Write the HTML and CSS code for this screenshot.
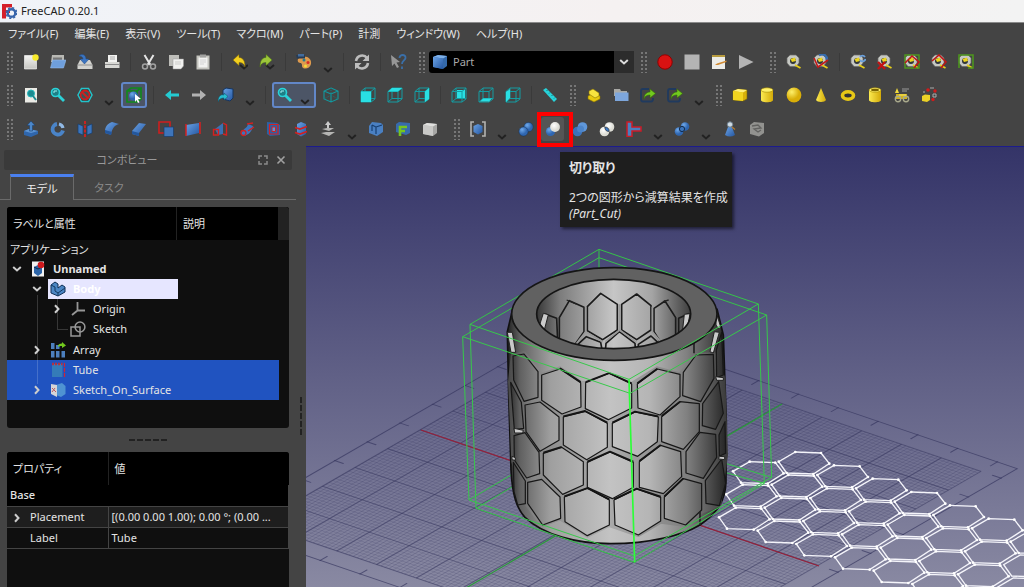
FILE: index.html
```html
<!DOCTYPE html>
<html lang="ja">
<head>
<meta charset="utf-8">
<title>FreeCAD 0.20.1</title>
<link rel="stylesheet" href="styles.css">
</head>
<body>
<svg class="sprite" aria-hidden="true">
  <defs>
    <linearGradient id="blue" x2="1" y2="1"><stop stop-color="#6ba3e6"/><stop offset="1" stop-color="#2456a0"/></linearGradient>
    <linearGradient id="yel" x2="1"><stop stop-color="#fbea50"/><stop offset="1" stop-color="#d3aa08"/></linearGradient>
    <linearGradient id="gry" y2="1" x2="0"><stop stop-color="#f4f4f2"/><stop offset="1" stop-color="#c4c4c0"/></linearGradient>
    <radialGradient id="ballb" cx=".35" cy=".3"><stop stop-color="#6fa9ea"/><stop offset="1" stop-color="#2f66b0"/></radialGradient>
    <radialGradient id="ballw" cx=".4" cy=".35"><stop stop-color="#fff"/><stop offset="1" stop-color="#dcdcd4"/></radialGradient>
    <radialGradient id="bally" cx=".35" cy=".3"><stop stop-color="#fdf06a"/><stop offset="1" stop-color="#d9ae08"/></radialGradient>
  </defs>
  <symbol id="new" viewBox="0 0 16 16"><path d="M1.500 1.500H13.500V15H1.500z" fill="url(#gry)" stroke="#fff" stroke-width=".6"/><circle cx="12.500" cy="3.500" r="3.200" fill="#f7ea2c"/></symbol>
  <symbol id="open" viewBox="0 0 16 16"><path d="M2 1H14V8H1z" fill="#b9b9b4"/><path d="M3 3.500H12V7H3z" fill="#777"/><path d="M2.500 6H16L13.500 14H.5z" fill="#6f9fdc" stroke="#9cc2ee" stroke-width=".5"/></symbol>
  <symbol id="save" viewBox="0 0 16 16"><path d="M3 6H13L15.500 11V15H.5V11z" fill="#d2d2ce"/><path d="M.5 11H15.500" stroke="#909090"/><path d="M2 2C5-1 9 1 9 5H12L7.500 10 3 5H6C6 3 4 2 2 2z" fill="#3b74c0" stroke="#204a87" stroke-width=".5"/></symbol>
  <symbol id="print" viewBox="0 0 16 16"><path d="M4 1H13V8H4z" fill="#f2f2f0"/><path d="M6 3H11M6 5H11" stroke="#aaa"/><path d="M1 8H15.500V14H1z" fill="#d8d8d4"/><path d="M1 10.500H15.500" stroke="#8c8c8c"/></symbol>
  <symbol id="cut" viewBox="0 0 16 16"><path d="M3.500 1 9.500 11M12.500 1 6.500 11" stroke="#e6e6e6" stroke-width="2"/><g fill="none" stroke="#a2a2a2" stroke-width="1.500"><circle cx="4" cy="12.500" r="2.500"/><circle cx="12" cy="12.500" r="2.500"/></g></symbol>
  <symbol id="copy" viewBox="0 0 16 16"><path d="M1 1H11V12H1z" fill="#bdbdb9"/><path d="M5 5H15.500V12L13 15H5z" fill="#f1f1ef" stroke="#999" stroke-width=".5"/><path d="M7 8H13M7 10H13" stroke="#bbb" stroke-width=".7"/></symbol>
  <symbol id="paste" viewBox="0 0 16 16"><path d="M1.500 1.500H14.500V15.500H1.500z" fill="#c3c3bd"/><path d="M3.500 3.500H12.500V13.500H3.500z" fill="#f2f2f0"/><path d="M5 .5H11V3.500H5z" fill="#a2a2a0"/><path d="M5 6H11M5 8H11M5 10H9" stroke="#c8c8c8" stroke-width=".7"/></symbol>
  <symbol id="undo" viewBox="0 0 16 16"><path d="m8 11 4 3.500 4-3.500" fill="none" stroke="#222" stroke-width="2"/><path d="M1 6 7 .5V3.500C11 3.500 13 7 13 13C12 9.500 10 8.500 7 8.500V11.500z" fill="#f2cf1f" stroke="#806800" stroke-width=".5"/></symbol>
  <symbol id="redo" viewBox="0 0 16 16"><path d="m7 11 4 3.500 4-3.500" fill="none" stroke="#222" stroke-width="2"/><path d="M13 6 7 .5V3.500C3 3.500 1 7 1 13C2 9.500 4 8.500 7 8.500V11.500z" fill="#9dc63a" stroke="#4e7a10" stroke-width=".5"/></symbol>
  <symbol id="palette" viewBox="0 0 16 16"><path d="M5 3C11 1 16 5 15 10C14 14 10 15.500 7 14C5 12 7 11 5 9C3 9 1 8 2 5z" fill="#dd9a4e"/><path d="M0 1H9V4.500H1z" fill="#263b55"/><path d="M2 0H8V2.500H2z" fill="#426c9e"/><circle cx="8" cy="6" r="1.500" fill="#287a90"/><circle cx="12" cy="8.500" r="1.500" fill="#d72b25"/><circle cx="9.500" cy="12" r="1.500" fill="#f2dc36"/></symbol>
  <symbol id="refresh" viewBox="0 0 16 16"><path d="M2 7C3 1 10 0 13 4M14 9C13 15 6 16 3 12" fill="none" stroke="#bcbcbc" stroke-width="2.600"/><path d="M15 .5V7H8.500zM1 15.500V9H7.500z" fill="#bcbcbc"/></symbol>
  <symbol id="what" viewBox="0 0 16 16"><path d="M0 1 9 8 5.500 8.500 8 13 6 14 3.500 9.500 1 12z" fill="#979797"/><path d="M8.500 4C8.500 0 15 0 14.500 4C14 7 11 6 11 10M11 12.500V15" fill="none" stroke="#3a6fa8" stroke-width="1.800"/></symbol>
  <symbol id="part" viewBox="0 0 16 16"><path d="M1 3 6 1 15 2 15 12 11 15 1 13z" fill="#3469aa"/><path d="M1 3 6 1 15 2 11 4.500z" fill="#7eb0e8"/><path d="M1 3 11 4.500V15L1 13z" fill="url(#blue)"/></symbol>
  <symbol id="rec" viewBox="0 0 16 16"><circle cx="8" cy="8" r="7.200" fill="#d81212" stroke="#920000"/></symbol>
  <symbol id="stop" viewBox="0 0 16 16"><path d="M.5.5H15.500V15.500H.5z" fill="#b4b4b4"/></symbol>
  <symbol id="edit" viewBox="0 0 16 16"><path d="M1 1H14V15H1z" fill="#ecece8"/><path d="M1 1H14V3H1z" fill="#b79b3e"/><path d="M4 11 6 9.500 15.500 6.500 15.500 8 7 11z" fill="#d08a33"/></symbol>
  <symbol id="play" viewBox="0 0 16 16"><path d="M1 1 15.500 8 1 15z" fill="#b4b4b4"/></symbol>
  <symbol id="tape" viewBox="0 0 16 16"><path d="M1 4 4 1H10L13 4V9L10 12.500H4L1 9z" fill="#c6c8c3" stroke="#6a6b68" stroke-width=".7"/><circle cx="7" cy="7" r="3" fill="#31363a"/><path d="M4.500 5 9 3.500 10 7 6 8z" fill="#ecd41f"/><path d="M9 11 14.500 14" stroke="#e8cf1a" stroke-width="1.800"/></symbol>
  <symbol id="tapea" viewBox="0 0 16 16"><use href="#tape"/><path d="M6 1C11-1 14 2 14 6" fill="none" stroke="#356cae" stroke-width="2.500"/><path d="M1 4 5 13 15 6" fill="none" stroke="#c31919" stroke-width="1.600"/></symbol>
  <symbol id="taper" viewBox="0 0 16 16"><use href="#tape"/><path d="M10 3A3 3 0 0 1 15 3M15.500 5A3 3 0 0 1 10 6" fill="none" stroke="#6aa0dc" stroke-width="1.800"/></symbol>
  <symbol id="tapex" viewBox="0 0 16 16"><use href="#tape"/><path d="m1 8 7 7M8 8l-7 7" stroke="#c31212" stroke-width="2.400"/></symbol>
  <symbol id="tapeb" viewBox="0 0 16 16"><use href="#tape"/><path d="M1 1H15V14H1z" fill="none" stroke="#4d951e" stroke-width="1.500"/><path d="m1 9 7-7 7 6-5 6" fill="none" stroke="#bd1717" stroke-width="1.600"/></symbol>
  <symbol id="tapec" viewBox="0 0 16 16"><use href="#tape"/><path d="m1 7 7-6 7 7-5 6" fill="none" stroke="#bd1717" stroke-width="1.600"/></symbol>
  <symbol id="taped" viewBox="0 0 16 16"><use href="#tape"/><path d="M1 14V1H15V14H10" fill="none" stroke="#4d951e" stroke-width="1.600"/></symbol>
  <symbol id="lens" viewBox="0 0 16 16"><circle cx="5.500" cy="5.500" r="4" fill="#1e7f86" stroke="#2bd2d8" stroke-width="1.600"/><path d="m8.500 8.500 5.500 5.500" stroke="#2bd2d8" stroke-width="2.800"/><path d="M4 6V4H7" fill="none" stroke="#9af2f2"/></symbol>
  <symbol id="fit" viewBox="0 0 16 16"><path d="M2 1H14V15.500H2z" fill="#ebebe6"/><circle cx="8" cy="6.500" r="3.500" fill="#1b8a90" stroke="#20b6bc"/><path d="m10 9 3 4" stroke="#1b8a90" stroke-width="2"/></symbol>
  <symbol id="style" viewBox="0 0 16 16"><path d="M4.500 1.500H11.500L15 8 11.500 14.500H4.500L1 8z" fill="#293b3c" stroke="#23c3ca" stroke-width="1.500"/><circle cx="8" cy="8" r="4.500" fill="#3c5557" stroke="#cf1f1f" stroke-width="1.800"/><path d="m5 5 6 6" stroke="#cf1f1f" stroke-width="1.800"/></symbol>
  <symbol id="box" viewBox="0 0 16 16"><path d="M1 4H11V15H1zM1 4 5 1H15L11 4M15 1V12L11 15" fill="none" stroke="#0f8a1c" stroke-width="1.600"/><circle cx="7.500" cy="9" r="4.500" fill="url(#ballb)"/><path d="m9 7 6 5-3 .3 1.500 3-1.500.7-1.500-3L9 15z" fill="#fff"/></symbol>
  <symbol id="left" viewBox="0 0 16 16"><path d="M1 8 7 3V6.500H15V9.500H7V13z" fill="#24cbd2"/></symbol>
  <symbol id="right" viewBox="0 0 16 16"><path d="M15 8 9 3V6.500H1V9.500H9V13z" fill="#b2b2b2"/></symbol>
  <symbol id="link" viewBox="0 0 16 16"><path d="M5 3 8 1 15 2V11L12 14 5 12z" fill="url(#blue)" stroke="#15345f"/><path d="M0 15C0 9 3 7 6 8V6L10 9.500 6 13V11C3 11 1 12 0 15z" fill="#28bcd0" stroke="#114a60" stroke-width=".5"/></symbol>
  <symbol id="iso" viewBox="0 0 16 16"><path d="M8 1 15 4V12L8 15 1 12V4zM1 4 8 7 15 4M8 7V15" fill="none" stroke="#12999f" stroke-width="1.100"/><path d="M8 1V8M8 8 1 12M8 8 15 12" stroke="#14797d" stroke-dasharray="1 1"/></symbol>
  <symbol id="wire" viewBox="0 0 16 16"><path d="M1 4.500H11V15H1zM1 4.500 5 1H15L11 4.500M15 1V12L11 15M5 1V11.500H15M5 11.500 1 15" fill="none" stroke="#149ca2"/></symbol>
  <symbol id="front" viewBox="0 0 16 16"><use href="#wire"/><path d="M1 4.500H11V15H1z" fill="#29dfe3"/></symbol>
  <symbol id="top" viewBox="0 0 16 16"><use href="#wire"/><path d="M1 4.500 5 1H15L11 4.500z" fill="#29dfe3"/></symbol>
  <symbol id="side" viewBox="0 0 16 16"><use href="#wire"/><path d="M11 4.500 15 1V12L11 15z" fill="#29dfe3"/></symbol>
  <symbol id="rear" viewBox="0 0 16 16"><path d="M6 3H14V11H6z" fill="#29dfe3"/><use href="#wire"/></symbol>
  <symbol id="bottom" viewBox="0 0 16 16"><use href="#wire"/><path d="M2 14.500 5 11.500H14L11 14.500z" fill="#29dfe3"/></symbol>
  <symbol id="lside" viewBox="0 0 16 16"><use href="#wire"/><path d="M1 5 5 2V11L1 15z" fill="#29dfe3"/></symbol>
  <symbol id="ruler" viewBox="0 0 16 16"><path d="M1 3 4 1 15 12 12 15z" fill="#27d3da"/><path d="m5.500 3-1 1M8 5.500l-1 1M10.500 8l-1 1M13 10.500l-1 1" stroke="#11757b"/></symbol>
  <symbol id="brick" viewBox="0 0 16 16"><path d="M2 9 8 6 14 9V12L8 15 2 12z" fill="#e8c910" stroke="#8a7200" stroke-width=".6"/><path d="M3 4 7 2 13 6V9L9 11 3 7z" fill="#f8e440" stroke="#8a7200" stroke-width=".6"/></symbol>
  <symbol id="folder" viewBox="0 0 16 16"><path d="M1 2H7L8 4H14V9H1z" fill="#a9a9a6"/><path d="M2 5.500H15.500V14H2z" fill="#7da6dc"/></symbol>
  <symbol id="export" viewBox="0 0 16 16"><path d="M9 2H3Q1 2 1 4V12Q1 14.500 3 14.500H11Q13 14.500 13 12V11" fill="none" stroke="#203a5e" stroke-width="1.800"/><path d="M4 12C4 7 7 5 10 5V2L15.500 6.500 10 11V8C7 8 5 9 4 12z" fill="#72c91f" stroke="#366c08" stroke-width=".6"/></symbol>
  <symbol id="ybox" viewBox="0 0 16 16"><path d="M1 4 6 2 15 3V12L11 14 1 13z" fill="#d8b20a" stroke="#7b6700" stroke-width=".6"/><path d="M1 4 6 2 15 3 11 5.500z" fill="#fff07a"/><path d="M1 4 11 5.500V14L1 13z" fill="#f2d520"/></symbol>
  <symbol id="ycyl" viewBox="0 0 16 16"><path d="M2 3V13C2 16 14 16 14 13V3z" fill="url(#yel)"/><ellipse cx="8" cy="3" rx="6" ry="2.200" fill="#fff16a" stroke="#a38800" stroke-width=".6"/></symbol>
  <symbol id="yball" viewBox="0 0 16 16"><circle cx="8" cy="8" r="7.400" fill="url(#bally)"/></symbol>
  <symbol id="ycone" viewBox="0 0 16 16"><path d="M8 1 13 13C12 15.500 4 15.500 3 13z" fill="url(#yel)"/></symbol>
  <symbol id="ytor" viewBox="0 0 16 16"><ellipse cx="8" cy="8.500" rx="5.500" ry="3.700" fill="#333" stroke="#e6c716" stroke-width="3.600"/></symbol>
  <symbol id="ytube" viewBox="0 0 16 16"><use href="#ycyl"/><ellipse cx="8" cy="3" rx="4" ry="1.200" fill="#7a6400"/></symbol>
  <symbol id="yprim" viewBox="0 0 16 16"><path d="M3 1 5 6H1z" fill="#f2dc3c"/><path d="M8 2H15M8 4H13" stroke="#999"/><path d="M2 7H13V12H2z" fill="#d1b31b"/><g fill="none" stroke="#a9a98c" stroke-width="1.400"><circle cx="4" cy="12" r="2.700"/><circle cx="12" cy="12" r="2.700"/></g><path d="M5 8H12" stroke="#ffea62"/></symbol>
  <symbol id="ybuild" viewBox="0 0 16 16"><path d="M1 9 4 7.500 9 8V13L6 15 1 14z" fill="#ecd126"/><g fill="#d11b1b"><circle cx="7" cy="3" r="1.800"/><circle cx="14" cy="4" r="1.700"/><circle cx="12" cy="12.500" r="1.700"/></g><path d="M9 1H13M12 7H15V10H12zM2 5H4" fill="none" stroke="#aaa"/></symbol>
  <symbol id="extr" viewBox="0 0 16 16"><path d="M1 10 6 8 15 10V13L8 16 1 14z" fill="#2f66ac"/><path d="M1 10 6 8 15 10 8 12z" fill="#5c94d4"/><path d="M8 0 12 4.500H9.500V10H6.500V4.500H4z" fill="#4c87c9" stroke="#163862" stroke-width=".5"/></symbol>
  <symbol id="revo" viewBox="0 0 16 16"><path d="M7 3A5.300 5.300 0 1 0 13 9.500" fill="none" stroke="#4a84c8" stroke-width="3.800"/><path d="M9 3A5.300 5.300 0 0 1 13 7" fill="none" stroke="#91b9e5" stroke-width="3.200"/></symbol>
  <symbol id="mirror" viewBox="0 0 16 16"><path d="M1 3 6 5V14L1 12zM15 3 10 5V14L15 12z" fill="#3b74bb" stroke="#173c6b" stroke-width=".7"/><path d="M8 0V16" stroke="#d52020" stroke-width="1.800" stroke-dasharray="3 1.300"/></symbol>
  <symbol id="fillet" viewBox="0 0 16 16"><path d="M1 12V9C2 4 5 2 8 1L15 3C11 4 8 7 7 14z" fill="url(#blue)"/><path d="M1 9 8 11 7 14 1 12z" fill="#24579c"/></symbol>
  <symbol id="chamfer" viewBox="0 0 16 16"><path d="M1 10 8 2 15 3 8 12V15L1 13z" fill="url(#blue)"/><path d="M1 10 8 12V15L1 13z" fill="#24579c"/></symbol>
  <symbol id="face" viewBox="0 0 16 16"><path d="M1 1H12V12H1z" fill="none" stroke="#cf1e1e" stroke-width="1.600"/><path d="M6 6H15.500V15.500H6z" fill="#3e75bb" stroke="#1a3c6c" stroke-width=".7"/></symbol>
  <symbol id="ruled" viewBox="0 0 16 16"><path d="M1 4 14 2V12L1 15z" fill="url(#blue)"/><path d="M1 3V15M15 1V13" stroke="#d52020" stroke-width="1.500"/></symbol>
  <symbol id="loft" viewBox="0 0 16 16"><path d="M3 8 11 2V13L6 14z" fill="#3b71b5"/><path d="M1.500 8.500H6.500V14H1.500z" fill="none" stroke="#d52020" stroke-width="1.400"/><path d="M11 2 14.500 4V14L11 13" fill="none" stroke="#d52020" stroke-width="1.400"/></symbol>
  <symbol id="sweep" viewBox="0 0 16 16"><path d="M2 13C5 6 8 8 9 3L14 5C13 11 9 14 5 15z" fill="#3c75bd"/><circle cx="4.500" cy="12" r="2.500" fill="none" stroke="#d52020" stroke-width="1.300"/><path d="M8 3 14 2M9 10 15 6" stroke="#d52020" stroke-width="1.500"/></symbol>
  <symbol id="offset" viewBox="0 0 16 16"><path d="M1 1 11 2 14 4V14L4 15 1 13z" fill="#2c61a5"/><path d="M3.500 3.500H12V13H3.500z" fill="none" stroke="#d52020" stroke-width="1.200"/><path d="M6 6H9.500V10.500H6z" fill="#5c94d4" stroke="#d52020"/></symbol>
  <symbol id="cross" viewBox="0 0 16 16"><path d="M4 3 8 1 13 3V13L8 15.500 4 13z" fill="url(#blue)"/><path d="M2 6.500 7 8 14 5.500M2 11.500 7 13 14 10.500" fill="none" stroke="#d52020" stroke-width="1.700"/></symbol>
  <symbol id="sect" viewBox="0 0 16 16"><path d="M8 0 11 4H9V8H7V4H5z" fill="#cacaca"/><path d="M2 8 7 7H14L9 10zM1 12 6 11H15L9 15z" fill="#b6b6b4"/></symbol>
  <symbol id="thick" viewBox="0 0 16 16"><path d="M4 1 13 2 15 4V11L9 15 1 12V5z" fill="#4a80c2"/><path d="M4 4 8 6V13M8 6 14 4M4 4V10" fill="none" stroke="#173e70" stroke-width="1.200"/></symbol>
  <symbol id="proj" viewBox="0 0 16 16"><path d="M1 3 4 1 15 2V12L11 14 1 11z" fill="#376bad"/><path d="M5 15V6H12M5 10H10" fill="none" stroke="#77c51f" stroke-width="2.600"/></symbol>
  <symbol id="gcube" viewBox="0 0 16 16"><path d="M1 4 5 2 15 3V12L11 15 1 13z" fill="#a6a6a4"/><path d="M1 4 11 5.500V15L1 13z" fill="#c9c9c7"/><path d="M1 4 5 2 15 3 11 5.500z" fill="#e0e0de"/></symbol>
  <symbol id="comp" viewBox="0 0 16 16"><path d="M3.500 5 8 3 12.500 5V11L8 13.500 3.500 11z" fill="url(#blue)"/><path d="M4 1H1V15H4M12 1H15V15H12" fill="none" stroke="#b3b3b1" stroke-width="1.600"/></symbol>
  <symbol id="bool" viewBox="0 0 16 16"><circle cx="10.500" cy="6" r="4.600" fill="url(#ballb)" stroke="#143258" stroke-width=".5"/><circle cx="5.500" cy="10.500" r="4.600" fill="url(#ballb)" stroke="#143258" stroke-width=".5"/></symbol>
  <symbol id="pcut" viewBox="0 0 16 16"><circle cx="5.500" cy="10.500" r="4.600" fill="url(#ballb)"/><circle cx="10" cy="6" r="4.900" fill="url(#ballw)"/></symbol>
  <symbol id="fuse" viewBox="0 0 16 16"><circle cx="10.500" cy="6" r="4.800" fill="#5f97da"/><circle cx="5.500" cy="10.500" r="4.800" fill="#3c73b9"/><circle cx="8.500" cy="8" r="3.500" fill="#4c85ca"/></symbol>
  <symbol id="common" viewBox="0 0 16 16"><circle cx="10.500" cy="6" r="4.800" fill="url(#ballw)"/><circle cx="5.500" cy="10.500" r="4.800" fill="url(#ballw)"/><path d="M5.800 6Q10.200 6 10.200 10.500Q5.800 10.500 5.800 6z" fill="#3c78c2" stroke="#222" stroke-width=".6"/></symbol>
  <symbol id="join" viewBox="0 0 16 16"><path d="M1 1H6V6H15V10H6V15.500H1z" fill="#4a7fbe" stroke="#cc1b26" stroke-width="1.500"/></symbol>
  <symbol id="split" viewBox="0 0 16 16"><circle cx="11" cy="5.500" r="4.300" fill="url(#ballb)"/><circle cx="5" cy="10.500" r="4.300" fill="url(#ballb)"/><circle cx="8" cy="8" r="2.600" fill="#3b74bb" stroke="#122c4d"/></symbol>
  <symbol id="check" viewBox="0 0 16 16"><path d="M6 6H10L13 14Q8 17 3 14z" fill="url(#blue)"/><circle cx="8" cy="3.500" r="2.700" fill="#cfdbe3" stroke="#6c7d8c"/><path d="m10 6 3 2.500" stroke="#b07a31" stroke-width="1.400"/></symbol>
  <symbol id="defeat" viewBox="0 0 16 16"><path d="M1 4 5 1 15 2V12L10 15.500 1 13z" fill="#92928f"/><path d="M3 5 9 4 12 7 5 8 9 11 12 9" fill="none" stroke="#626260" stroke-width="1.300"/></symbol>
  <symbol id="chev" viewBox="0 0 10 6"><path d="m1.200 1 3.800 3.500L8.800 1" fill="none" stroke="currentColor" stroke-width="2"/></symbol>
  <symbol id="logo" viewBox="0 0 16 16"><path d="M1 1H11V4.500H5V7H9V10H5V15.500H1z" fill="#d5202a"/><circle cx="10.500" cy="10" r="3.800" fill="none" stroke="#3765ab" stroke-width="2.400"/><circle cx="10.500" cy="10" r="5.300" fill="none" stroke="#3765ab" stroke-width="1.400" stroke-dasharray="2.160 2"/></symbol>
  <symbol id="doc" viewBox="0 0 16 16"><path d="M2 .5H14V15.500H2z" fill="#f1f1f1"/><path d="M4 6 8 4 12 6V12L8 15 4 12z" fill="#2d65a8"/><path d="M4 6 8 8 12 6" stroke="#0e2948" fill="none"/><circle cx="11" cy="4" r="3.300" fill="#cf1a1e"/></symbol>
  <symbol id="body" viewBox="0 0 16 16"><path d="M1 4 5 1 8 3V7L12 4 15 6V11L8 15 1 12z" fill="#4c86c4" stroke="#0e2e55"/><path d="M1 4 5 6V10L8 12V15M8 12 15 7" fill="none" stroke="#123961"/></symbol>
  <symbol id="origin" viewBox="0 0 16 16"><path d="M7.500 1V9.500H15M7.500 9.500 2 14" fill="none" stroke="#969696" stroke-width="1.800"/></symbol>
  <symbol id="sketch" viewBox="0 0 16 16"><path d="M1 6H10V15H1z" fill="none" stroke="#989898" stroke-width="1.500"/><circle cx="10" cy="6" r="4.900" fill="none" stroke="#989898" stroke-width="1.500"/></symbol>
  <symbol id="array" viewBox="0 0 16 16"><g fill="#4c7fbd"><path d="M1 1H4.500V7H1zM6 3H9.500V7H6zM1 9H4.500V15.500H1zM6 9H9.500V15.500H6zM11.500 9H15V15.500H11.500z"/></g><path d="M8 5C8 2 10 1.500 12 1.500V0L16 3.500 12 6V4C10 4 9 4 8 5z" fill="#72c81d"/></symbol>
  <symbol id="tube" viewBox="0 0 16 16"><path d="M2 2H12.500V15H2z" fill="#347bb8"/><path d="M2 2H12.500" stroke="#b23242" stroke-width="2.500" stroke-dasharray="2 1"/><path d="M14.500 1V15" stroke="#cf2634" stroke-width="1.200" stroke-dasharray="4 1"/></symbol>
  <symbol id="surf" viewBox="0 0 16 16"><path d="M6 3 12 1 15.500 4V12L11 15 6 13z" fill="#4f93d2"/><path d="M1 2 7 3V15L1 12z" fill="#d5d5d7"/><path d="m2 6 4 4M5 6 2 10" stroke="#be5a5f"/></symbol>
</svg>

<div class="app">
  <header class="titlebar"><svg class="ico"><use href="#logo"/></svg><span>FreeCAD 0.20.1</span></header>
  <nav class="menubar">
    <button>ファイル(F)</button><button>編集(E)</button><button>表示(V)</button><button>ツール(T)</button><button>マクロ(M)</button><button>パート(P)</button><button>計測</button><button>ウィンドウ(W)</button><button>ヘルプ(H)</button>
  </nav>

  <div class="toolrow first">
    <div class="bar"><i class="grip"></i>
      <button class="tool" aria-label="新規"><svg class="ico"><use href="#new"/></svg></button>
      <button class="tool" aria-label="開く"><svg class="ico"><use href="#open"/></svg></button>
      <button class="tool" aria-label="保存"><svg class="ico"><use href="#save"/></svg></button>
      <button class="tool" aria-label="印刷"><svg class="ico"><use href="#print"/></svg></button>
      <i class="sep"></i>
      <button class="tool" aria-label="カット"><svg class="ico"><use href="#cut"/></svg></button>
      <button class="tool" aria-label="コピー"><svg class="ico"><use href="#copy"/></svg></button>
      <button class="tool" aria-label="貼り付け"><svg class="ico"><use href="#paste"/></svg></button>
      <i class="sep"></i>
      <button class="tool" aria-label="元に戻す"><svg class="ico"><use href="#undo"/></svg></button>
      <button class="tool" aria-label="やり直す"><svg class="ico"><use href="#redo"/></svg></button>
      <i class="sep"></i>
      <button class="tool" aria-label="外観"><svg class="ico"><use href="#palette"/></svg></button>
      <button class="drop" aria-label="メニュー"><svg><use href="#chev"/></svg></button>
      <i class="sep"></i>
      <button class="tool" aria-label="更新"><svg class="ico"><use href="#refresh"/></svg></button>
      <i class="sep"></i>
      <button class="tool" aria-label="これは何"><svg class="ico"><use href="#what"/></svg></button>
    </div>
    <div class="bar"><i class="grip"></i>
      <div class="combo">
        <svg class="ico"><use href="#part"/></svg>
        <select aria-label="ワークベンチ"><option>Part</option></select>
        <span class="combo-arrow"><svg><use href="#chev"/></svg></span>
      </div>
    </div>
    <div class="bar"><i class="grip"></i>
      <button class="tool" aria-label="マクロの記録"><svg class="ico"><use href="#rec"/></svg></button>
      <button class="tool" aria-label="記録の停止"><svg class="ico"><use href="#stop"/></svg></button>
      <button class="tool" aria-label="マクロ"><svg class="ico"><use href="#edit"/></svg></button>
      <button class="tool" aria-label="マクロの実行"><svg class="ico"><use href="#play"/></svg></button>
    </div>
    <div class="bar apart"><i class="grip"></i>
      <button class="tool" aria-label="直線の計測"><svg class="ico"><use href="#tape"/></svg></button>
      <button class="tool" aria-label="角度の計測"><svg class="ico"><use href="#tapea"/></svg></button>
      <i class="sep"></i>
      <button class="tool" aria-label="計測の更新"><svg class="ico"><use href="#taper"/></svg></button>
      <button class="tool" aria-label="計測の消去"><svg class="ico"><use href="#tapex"/></svg></button>
      <button class="tool" aria-label="すべて切り替え"><svg class="ico"><use href="#tapeb"/></svg></button>
      <button class="tool" aria-label="3Dの切り替え"><svg class="ico"><use href="#tapec"/></svg></button>
      <button class="tool" aria-label="差分の切り替え"><svg class="ico"><use href="#taped"/></svg></button>
    </div>
  </div>

  <div class="toolrow">
    <div class="bar"><i class="grip"></i>
      <button class="tool" aria-label="全てにフィット"><svg class="ico"><use href="#fit"/></svg></button>
      <button class="tool" aria-label="選択にフィット"><svg class="ico"><use href="#lens"/></svg></button>
      <button class="tool" aria-label="描画スタイル"><svg class="ico"><use href="#style"/></svg></button>
      <button class="drop" aria-label="メニュー"><svg><use href="#chev"/></svg></button>
      <button class="tool on" aria-label="バウンディングボックス"><svg class="ico"><use href="#box"/></svg></button>
      <i class="sep"></i>
      <button class="tool" aria-label="戻る"><svg class="ico"><use href="#left"/></svg></button>
      <button class="tool" aria-label="進む"><svg class="ico"><use href="#right"/></svg></button>
      <button class="tool" aria-label="リンク"><svg class="ico"><use href="#link"/></svg></button>
      <button class="drop" aria-label="メニュー"><svg><use href="#chev"/></svg></button>
      <i class="sep"></i>
      <button class="tool on wide" aria-label="ズーム"><svg class="ico"><use href="#lens"/></svg><svg class="chev"><use href="#chev"/></svg></button>
      <button class="tool" aria-label="等角投影"><svg class="ico"><use href="#iso"/></svg></button>
      <i class="sep"></i>
      <button class="tool" aria-label="正面"><svg class="ico"><use href="#front"/></svg></button>
      <button class="tool" aria-label="上面"><svg class="ico"><use href="#top"/></svg></button>
      <button class="tool" aria-label="右"><svg class="ico"><use href="#side"/></svg></button>
      <i class="sep"></i>
      <button class="tool" aria-label="背面"><svg class="ico"><use href="#rear"/></svg></button>
      <button class="tool" aria-label="底面"><svg class="ico"><use href="#bottom"/></svg></button>
      <button class="tool" aria-label="左"><svg class="ico"><use href="#lside"/></svg></button>
      <i class="sep"></i>
      <button class="tool" aria-label="距離"><svg class="ico"><use href="#ruler"/></svg></button>
    </div>
    <div class="bar"><i class="grip"></i>
      <button class="tool" aria-label="パーツ"><svg class="ico"><use href="#brick"/></svg></button>
      <button class="tool" aria-label="グループ"><svg class="ico"><use href="#folder"/></svg></button>
      <button class="tool" aria-label="リンク作成"><svg class="ico"><use href="#export"/></svg></button>
      <button class="tool" aria-label="サブリンク"><svg class="ico"><use href="#export"/></svg></button>
      <button class="drop" aria-label="メニュー"><svg><use href="#chev"/></svg></button>
    </div>
    <div class="bar"><i class="grip"></i>
      <button class="tool" aria-label="直方体"><svg class="ico"><use href="#ybox"/></svg></button>
      <button class="tool" aria-label="円柱"><svg class="ico"><use href="#ycyl"/></svg></button>
      <button class="tool" aria-label="球"><svg class="ico"><use href="#yball"/></svg></button>
      <button class="tool" aria-label="円錐"><svg class="ico"><use href="#ycone"/></svg></button>
      <button class="tool" aria-label="トーラス"><svg class="ico"><use href="#ytor"/></svg></button>
      <button class="tool" aria-label="チューブ"><svg class="ico"><use href="#ytube"/></svg></button>
      <button class="tool" aria-label="プリミティブ"><svg class="ico"><use href="#yprim"/></svg></button>
      <button class="tool" aria-label="シェイプビルダー"><svg class="ico"><use href="#ybuild"/></svg></button>
    </div>
  </div>

  <div class="toolrow">
    <div class="bar"><i class="grip"></i>
      <button class="tool" aria-label="押し出し"><svg class="ico"><use href="#extr"/></svg></button>
      <button class="tool" aria-label="回転押し出し"><svg class="ico"><use href="#revo"/></svg></button>
      <button class="tool" aria-label="ミラー"><svg class="ico"><use href="#mirror"/></svg></button>
      <button class="tool" aria-label="フィレット"><svg class="ico"><use href="#fillet"/></svg></button>
      <button class="tool" aria-label="面取り"><svg class="ico"><use href="#chamfer"/></svg></button>
      <button class="tool" aria-label="面の作成"><svg class="ico"><use href="#face"/></svg></button>
      <button class="tool" aria-label="線織面"><svg class="ico"><use href="#ruled"/></svg></button>
      <button class="tool" aria-label="ロフト"><svg class="ico"><use href="#loft"/></svg></button>
      <button class="tool" aria-label="スイープ"><svg class="ico"><use href="#sweep"/></svg></button>
      <button class="tool" aria-label="断面"><svg class="ico"><use href="#offset"/></svg></button>
      <button class="tool" aria-label="断面図"><svg class="ico"><use href="#cross"/></svg></button>
      <button class="tool" aria-label="オフセット"><svg class="ico"><use href="#sect"/></svg></button>
      <button class="drop" aria-label="メニュー"><svg><use href="#chev"/></svg></button>
      <button class="tool" aria-label="厚み"><svg class="ico"><use href="#thick"/></svg></button>
      <button class="tool" aria-label="投影"><svg class="ico"><use href="#proj"/></svg></button>
      <button class="tool" aria-label="面の色"><svg class="ico"><use href="#gcube"/></svg></button>
    </div>
    <div class="bar apart"><i class="grip"></i>
      <button class="tool" aria-label="コンパウンド"><svg class="ico"><use href="#comp"/></svg></button>
      <button class="drop" aria-label="メニュー"><svg><use href="#chev"/></svg></button>
      <button class="tool" aria-label="ブーリアン演算"><svg class="ico"><use href="#bool"/></svg></button>
      <button class="tool hover" aria-label="切り取り"><svg class="ico"><use href="#pcut"/></svg><i class="mark"></i></button>
      <button class="tool" aria-label="結合"><svg class="ico"><use href="#fuse"/></svg></button>
      <button class="tool" aria-label="共通集合"><svg class="ico"><use href="#common"/></svg></button>
      <button class="tool" aria-label="接続"><svg class="ico"><use href="#join"/></svg></button>
      <button class="drop" aria-label="メニュー"><svg><use href="#chev"/></svg></button>
      <button class="tool" aria-label="分割"><svg class="ico"><use href="#split"/></svg></button>
      <button class="drop" aria-label="メニュー"><svg><use href="#chev"/></svg></button>
      <button class="tool" aria-label="形状チェック"><svg class="ico"><use href="#check"/></svg></button>
      <button class="tool" aria-label="フィーチャー除去"><svg class="ico"><use href="#defeat"/></svg></button>
    </div>
  </div>

  <main class="main">
    <aside class="dock">
      <div class="dock-title"><span>コンボビュー</span>
        <button aria-label="フロート"><svg viewBox="0 0 10 10"><path d="M1 4V1H4M6 1H9V4M9 6V9H6M4 9H1V6" fill="none" stroke="#8a8a8a" stroke-width="1.500"/></svg></button>
        <button aria-label="閉じる"><svg viewBox="0 0 10 10"><path d="m1.500 1.500 7 7M8.500 1.500l-7 7" stroke="#a0a0a0" stroke-width="1.600"/></svg></button>
      </div>
      <div class="tabs"><button class="tab active">モデル</button><button class="tab">タスク</button></div>
      <section class="tree">
        <div class="tree-head"><span>ラベルと属性</span><span>説明</span><i></i></div>
        <div class="tree-root">アプリケーション</div>
        <ul>
          <li><div class="row l0"><svg class="exp open"><use href="#chev"/></svg><span class="item"><svg class="ico"><use href="#doc"/></svg><b>Unnamed</b></span></div>
            <ul class="guide g1">
              <li><div class="row l1"><svg class="exp open"><use href="#chev"/></svg><span class="item light"><svg class="ico"><use href="#body"/></svg><b>Body</b></span></div>
                <ul class="guide g2">
                  <li><div class="row l2"><svg class="exp"><use href="#chev"/></svg><span class="item"><svg class="ico"><use href="#origin"/></svg>Origin</span></div></li>
                  <li><div class="row l2"><i class="exp"></i><span class="item"><svg class="ico"><use href="#sketch"/></svg>Sketch</span></div></li>
                </ul></li>
              <li><div class="row l1"><svg class="exp"><use href="#chev"/></svg><span class="item"><svg class="ico"><use href="#array"/></svg>Array</span></div></li>
              <li><div class="row l1 sel"><i class="exp"></i><span class="item"><svg class="ico"><use href="#tube"/></svg>Tube</span></div></li>
              <li><div class="row l1 sel"><svg class="exp"><use href="#chev"/></svg><span class="item"><svg class="ico"><use href="#surf"/></svg>Sketch_On_Surface</span></div></li>
            </ul></li>
        </ul>
      </section>
      <div class="hsplit"></div>
      <section class="props">
        <table>
          <thead><tr><th>プロパティ</th><th>値</th></tr></thead>
          <tbody>
            <tr class="group"><td colspan="2">Base</td></tr>
            <tr class="alt"><td class="name"><svg class="exp"><use href="#chev"/></svg>Placement</td><td>[(0.00 0.00 1.00); 0.00 °; (0.00 ...</td></tr>
            <tr><td class="name">Label</td><td>Tube</td></tr>
          </tbody>
        </table>
      </section>
      <i class="vsplit"></i>
    </aside>

    <section class="view">
      <svg class="scene" viewBox="306 146 718 441" preserveAspectRatio="xMinYMin slice" role="img" aria-label="3Dビュー">
        <defs>
          <linearGradient id="sky" x2="0" y2="1"><stop stop-color="#343468"/><stop offset="1" stop-color="#8989a2"/></linearGradient>
          <linearGradient id="metal" gradientUnits="userSpaceOnUse" x1="170" y1="0" x2="830" y2="0"><stop stop-color="#1d1d1d"/><stop offset=".06" stop-color="#606060"/><stop offset=".2" stop-color="#9f9f9f"/><stop offset=".47" stop-color="#c3c3c3"/><stop offset=".65" stop-color="#b5b5b5"/><stop offset=".82" stop-color="#808080"/><stop offset=".93" stop-color="#494949"/><stop offset="1" stop-color="#242424"/></linearGradient>
          <linearGradient id="groove" gradientUnits="userSpaceOnUse" x1="170" y1="0" x2="830" y2="0"><stop stop-color="#444"/><stop offset=".12" stop-color="#858585"/><stop offset=".45" stop-color="#acacac"/><stop offset=".85" stop-color="#7b7b7b"/><stop offset="1" stop-color="#3a3a3a"/></linearGradient>
          <linearGradient id="inside" gradientUnits="userSpaceOnUse" x1="260" y1="0" x2="722" y2="0"><stop stop-color="#383838"/><stop offset=".15" stop-color="#7c7c7c"/><stop offset=".5" stop-color="#c6c6c6"/><stop offset=".75" stop-color="#a4a4a4"/><stop offset="1" stop-color="#3e3e3e"/></linearGradient>
          <clipPath id="bore"><ellipse cx="491" cy="237" rx="231" ry="104"/></clipPath>
          <path id="hex" d="M-26-32 51-29 76 3 28 34-52 31-76-3z"/>
          <g id="hexrow"><use href="#hex"/><use href="#hex" x="116" y="40"/><use href="#hex" x="232" y="80"/><use href="#hex" x="348" y="120"/><use href="#hex" x="464" y="160"/><use href="#hex" x="580" y="200"/><use href="#hex" x="696" y="240"/><use href="#hex" x="812" y="280"/></g>
          <circle id="dot" r="4"/>
          <g id="dots"><use href="#dot" x="-26" y="-32"/><use href="#dot" x="51" y="-29"/><use href="#dot" x="76" y="3"/><use href="#dot" x="28" y="34"/><use href="#dot" x="-52" y="31"/><use href="#dot" x="-76" y="-3"/></g>
          <g id="dotrow"><use href="#dots"/><use href="#dots" x="116" y="40"/><use href="#dots" x="232" y="80"/><use href="#dots" x="348" y="120"/><use href="#dots" x="464" y="160"/><use href="#dots" x="580" y="200"/><use href="#dots" x="696" y="240"/></g>
        </defs>
        <rect x="306" y="146" width="718" height="441" fill="url(#sky)"/>
        <path d="M306 146.500H1024" stroke="#1c1c8c"/>

        <g transform="matrix(3.98 1.355 3.26 -1.88 619 497.600)" fill="none" stroke="#33335c">
          <path d="M-50 0H50" stroke-width="100" stroke-dasharray=".22 .78" opacity=".24"/>
          <path d="M0-50V50" stroke-width="100" stroke-dasharray=".22 .78" opacity=".24"/>
          <path d="M-50.150 0H50.200" stroke-width="100" stroke-dasharray=".3 9.700" opacity=".5"/>
          <path d="M0-50.150V50.200" stroke-width="100" stroke-dasharray=".3 9.700" opacity=".5"/>
          <path d="M-55-55H55V55H-55z" stroke-width=".3" opacity=".65"/>
          <path d="M-50.150 54H50.200M-50.150-54H50.200M54-50.150V50.200M-54-50.150V50.200" stroke-width="2.400" stroke-dasharray=".3 9.700" opacity=".65"/>
        </g>
        <path d="M421 430 819 566" stroke="#96203a" stroke-width="1.200"/>
        <path d="M466 588 782 404" stroke="#2b9a3c" stroke-width="1.200"/>

        <g transform="translate(700 400) scale(.33333)" fill="none" stroke="#f4f4fa" stroke-width="4">
          <use href="#hexrow" x="312" y="188"/><use href="#hexrow" x="175" y="217"/><use href="#hexrow" x="154" y="286"/><use href="#hexrow" x="133" y="355"/>
          <g fill="#fff" stroke="none"><use href="#dotrow" x="312" y="188"/><use href="#dotrow" x="175" y="217"/><use href="#dotrow" x="154" y="286"/><use href="#dotrow" x="133" y="355"/></g>
        </g>

        <g transform="translate(450 235) scale(.33333)" stroke-linejoin="round">
          <g fill="none" stroke="#35c448" stroke-width="3">
            <path d="M60 268 447 43 925 207M38 305 447 68 950 240M447 43V110M57 795 440 568 965 727M78 820 440 605 943 745"/>
          </g>
          <path d="M185 235 172 290 176 480 183 705C187 780 200 820 225 847C280 900 380 926 482 926C600 926 700 900 750 870C800 835 826 800 828 740L829 560 820 300 801 222z" fill="url(#metal)" stroke="#111" stroke-width="5"/>
          <g fill="url(#groove)" stroke="url(#groove)" stroke-width="12">
            <path d="M275 420 330 400 392 443 545 447 622 400 690 418 740 360 792 358 820 430 828 660 808 810 755 830 707 870 632 860 565 900 478 870 412 902 330 850 278 870 228 805 190 680 180 440 188 362 222 355 265 410z"/>
          </g>
          <g fill="url(#metal)" stroke="#171717" stroke-width="3.600">
            <path d="M222 357 264 410 264 487 222 499 191 435 189 363z"/>
            <path d="M275 420 330 402 392 443 393 516 336 537 275 496z"/>
            <path d="M407 443 477 415 545 447 545 519 475 554 406 521z"/>
            <path d="M562 447 622 402 690 418 690 485 630 540 564 519z"/>
            <path d="M700 412 738 360 790 358 792 430 752 500 698 482z"/>
            <path d="M799 345 815 292 820 420 800 428z"/>
            <path d="M182 442 214 502 221 580 193 584z"/>
            <path d="M225 510 270 501 327 546 327 616 270 649 228 590z"/>
            <path d="M340 546 405 529 472 565 472 637 410 674 340 630z"/>
            <path d="M487 565 555 531 625 546 622 620 563 664 487 635z"/>
            <path d="M635 545 690 500 748 506 748 590 700 643 635 620z"/>
            <path d="M758 506 806 440 820 535 797 583 757 572z"/>
            <path d="M192 602 225 593 267 652 269 716 230 729 193 675z"/>
            <path d="M280 655 335 637 400 680 400 750 338 778 280 720z"/>
            <path d="M412 682 480 651 550 682 550 757 487 791 412 757z"/>
            <path d="M568 680 632 631 692 650 695 725 640 776 568 757z"/>
            <path d="M708 650 750 592 797 598 800 667 760 730 708 714z"/>
            <path d="M807 600 825 560 827 655 808 664z"/>
            <path d="M190 682 226 738 226 806 203 810 192 770z"/>
            <path d="M233 742 275 733 330 786 332 850 278 870 233 805z"/>
            <path d="M343 786 412 760 478 795 478 870 412 902 345 860z"/>
            <path d="M492 795 560 762 632 787 632 858 565 900 495 870z"/>
            <path d="M643 786 700 731 755 746 755 825 707 870 643 850z"/>
            <path d="M766 737 815 672 827 745 808 812 768 805z"/>
          </g>
          <g fill="none" stroke="#141414" stroke-width="5.500">
            <path d="M330 400 392 441M407 441 477 414 545 445M562 445 622 401M340 544 405 528 472 563M487 563 555 530 625 544M635 543 690 500M412 680 480 650 550 680M568 678 632 630M280 653 335 636M343 784 412 759 478 793M492 793 560 761 632 785M643 784 700 730"/>
          </g>
          <g fill="#c9c9c9" stroke="#222" stroke-width="3">
            <path d="M172 292 187 292 197 352 183 352zM798 230 812 276 806 282 798 270zM793 290 808 292 790 354 780 350zM192 580 220 586 218 594 194 594zM186 664 196 668 196 676 186 674zM797 425 820 428 820 436 800 436zM808 664 824 665 824 674 806 672z"/>
          </g>
          <path d="M732 318V355M750 830V870" stroke="#222" stroke-width="5"/>
          <ellipse cx="493" cy="237" rx="308" ry="139" fill="#616161" stroke="#151515" stroke-width="5"/>
          <g clip-path="url(#bore)">
            <path d="M255 130H725V345H255z" fill="url(#inside)"/>
            <g fill="url(#inside)" stroke="#1b1b1b" stroke-width="5">
              <path d="M412 215 452 175 502 208 502 285 458 314 412 287zM515 208 560 177 603 212 603 285 560 314 515 285zM328 248 358 197 402 217 402 290 374 330 328 314zM612 220 645 198 677 248 677 310 640 335 612 290z"/>
              <path d="M376 335 409 305 452 322 458 355H390zM466 350 468 325 508 290 555 325 557 355zM565 355V328L603 303 640 338z"/>
              <path d="M285 237 320 250 323 320 280 300zM686 250 716 236 716 290 686 305z"/>
            </g>
            <path d="M280 235 295 239 280 296 264 285zM703 238 720 236 712 280 698 284z" fill="#ccc" stroke="#222" stroke-width="3"/>
            <path d="M407 215V290L376 330M509 208V285L466 320M509 285 560 322M607 215V290L645 335M407 290 458 320" stroke="#999" stroke-width="5" fill="none"/>
            <path d="M350 195 378 207M640 200 656 195" stroke="#222" stroke-width="4"/>
          </g>
          <ellipse cx="491" cy="237" rx="231" ry="104" fill="none" stroke="#151515" stroke-width="5"/>
          <g fill="none" stroke="#37c94a" stroke-width="3">
            <path d="M60 268 537 433 925 207M38 305 540 475 950 240M60 268 78 820 553 982 943 745 925 207M38 305 57 795 553 963 965 727 950 240"/>
            <path d="M537 433 554 982" stroke="#2cff38" stroke-width="5"/>
          </g>
        </g>
      </svg>
      <div class="tooltip" role="tooltip"><strong>切り取り</strong><p>2つの図形から減算結果を作成<br><em>(Part_Cut)</em></p></div>
    </section>
  </main>
</div>
</body>
</html>
```
FILE: styles.css
```css
* { box-sizing: border-box; }
body {
  margin: 0;
  background: #444;
  color: #e4e4e4;
  font: 11px/16px "Noto Sans", "Noto Sans CJK JP", sans-serif;
  font-feature-settings: "palt";
}
button, select { font: inherit; font-feature-settings: inherit; color: inherit; background: none; border: 0; padding: 0; }
ul { list-style: none; margin: 0; padding: 0; }
.sprite { position: absolute; width: 0; height: 0; }
.ico { width: 16px; height: 16px; flex: none; display: block; }
.app { display: flex; flex-direction: column; height: 100vh; overflow: hidden; }

.titlebar {
  display: flex; align-items: center; gap: 4px; height: 23px; padding-left: 1px; flex: none;
  background: linear-gradient(90deg, #f0f3f8, #f5f1f1 60%, #f3f3f3);
  border-bottom: 1px solid #8a8a8a; color: #222;
}
.menubar { display: flex; gap: 16px; height: 22px; padding-left: 8px; align-items: center; flex: none; white-space: nowrap; }

.toolrow { display: flex; height: 34px; flex: none; }
.toolrow.first { height: 33px; }
.bar { display: flex; align-items: center; margin-left: 5px; }
.bar.apart { margin-left: 9px; }
.grip { width: 12px; height: 22px; background: radial-gradient(circle, #777 1px, transparent 1px) 1px 0 / 4px 4px; background-clip: content-box; padding-right: 4px; }
.tool { position: relative; display: flex; align-items: center; justify-content: center; width: 27px; height: 26px; flex: none; }
.tool.on { border: 2px solid #6287c8; border-radius: 3px; background: #4c5566; margin: 0 1px 0 2px; width: 26px; }
.tool.wide { width: 44px; justify-content: flex-start; padding-left: 3px; gap: 7px; }
.chev { width: 10px; height: 6px; margin-top: 14px; color: #222; }
.tool.hover::before { content: ""; position: absolute; inset: 1px 2px; background: #555; border-radius: 3px; }
.tool.hover .ico { position: relative; }
.mark { position: absolute; z-index: 2; top: -4px; bottom: -5px; left: -2px; right: -7px; border: 4px solid #f00; }
.sep { width: 10px; height: 18px; background: linear-gradient(#3a3a3a, #3a3a3a) center / 1px 100% no-repeat; }
.drop { display: flex; justify-content: center; width: 21px; padding-top: 16px; color: #222; }
.drop svg { width: 10px; height: 6px; }

.combo { position: relative; display: flex; width: 205px; height: 22px; }
.combo select { appearance: none; width: 100%; background: #000; color: #aaa; padding-left: 24px; border-radius: 3px; }
.combo .ico { position: absolute; left: 3px; top: 3px; }
.combo-arrow { position: absolute; right: 0; top: 0; bottom: 0; width: 20px; display: grid; place-items: center; background: #2c2c2c; color: #ddd; pointer-events: none; }
.combo-arrow svg { width: 10px; height: 6px; }

.main { display: flex; flex: 1; min-height: 0; }
.dock { position: relative; display: flex; flex-direction: column; flex: 0 0 306px; padding: 4px 17px 0 0; }
.dock-title { display: flex; align-items: center; gap: 8px; height: 20px; margin-left: 4px; padding-right: 6px; background: #3a3a3a; color: #999; margin-right: -3px; border-radius: 2px; }
.dock-title span { flex: 1; text-align: center; padding-left: 0; }
.dock-title button, .dock-title svg { width: 10px; height: 10px; display: block; }
.tabs { display: flex; height: 26px; margin: 4px -7px 7px 0; padding-left: 10px; border-bottom: 1px solid #6a6a6a; }
.tab { width: 64px; color: #888; border-top: 3px solid transparent; }
.tab:last-child { margin-left: 3px; }
.tab.active { height: 26px; color: #eee; background: #444; border: 1px solid #6a6a6a; border-top: 3px solid #4a80f0; border-bottom: 0; }

.tree { height: 221px; margin-left: 7px; background: #0f0f0f; border-radius: 3px; overflow: hidden; flex: none; }
.tree-head { display: grid; grid-template-columns: 170px 1fr 10px; height: 33px; background: #000; line-height: 33px; }
.tree-head span { padding-left: 6px; border-right: 1px solid #222; }
.tree-head i { background: #222; }
.tree-root { height: 19px; line-height: 19px; padding-left: 3px; }
.row { display: flex; align-items: center; height: 20px; }
.row.l1 { padding-left: 20px; }
.row.l2 { padding-left: 40px; }
.row.sel { background: #2053c0; margin-right: 10px; }
.item { display: flex; align-items: center; flex: 1; gap: 7px; margin-left: 1px; padding-left: 2px; height: 20px; }
.item.light { background: #e6e6ff; color: #fff; margin-right: 111px; }
.exp { width: 20px; height: 6px; flex: none; color: #ccc; transform: rotate(-90deg); }
.exp.open { transform: none; }
.guide { position: relative; }
.guide::before { content: ""; position: absolute; z-index: 1; border-left: 1px solid #ffffff2b; }
.g1::before { left: 30px; top: 16px; bottom: 16px; }
.g2::before { left: 50px; top: 0; bottom: 10px; width: 10px; border-bottom: 1px solid #ffffff2b; }
.g2 { padding-bottom: 1px; }

.hsplit { width: 40px; height: 2px; margin: 11px 0 11px 129px; flex: none; background: repeating-linear-gradient(90deg, #222 0 6px, transparent 6px 8px); }
.vsplit { position: absolute; left: 300px; bottom: 150px; width: 2px; height: 40px; background: repeating-linear-gradient(#222 0 6px, transparent 6px 8px); }
.props { flex: 1; margin-left: 7px; background: #0f0f0f; border-radius: 3px 3px 0 0; overflow: hidden; }
.props table { width: 100%; border-collapse: collapse; table-layout: fixed; }
.props th { height: 33px; padding: 0 6px; background: #000; text-align: left; font-weight: 400; }
.props th:first-child { width: 101px; border-right: 1px solid #222; }
.props td { height: 21px; padding: 0 3px; border: 1px solid #444; border-left-width: 0; white-space: nowrap; }
.props .group td { padding-left: 3px; background: #000; font-weight: 500; border-top: 0; }
.props .alt td { background: #1e1e1e; }
.props .name { padding-left: 23px; position: relative; }
.props .exp { position: absolute; left: 0; top: 8px; }

.view { position: relative; flex: 1; min-width: 0; overflow: hidden; }
.scene { display: block; width: 100%; height: 100%; }
.tooltip { position: absolute; left: 254px; top: 6px; padding: 7px 4px 5px 9px; background: #1e1e1e; box-shadow: 2px 2px 3px #0008; white-space: nowrap; font-size: 12px; }
.tooltip strong { font-size: 13px; }
.tooltip p { margin: 14px 0 0; }
```
